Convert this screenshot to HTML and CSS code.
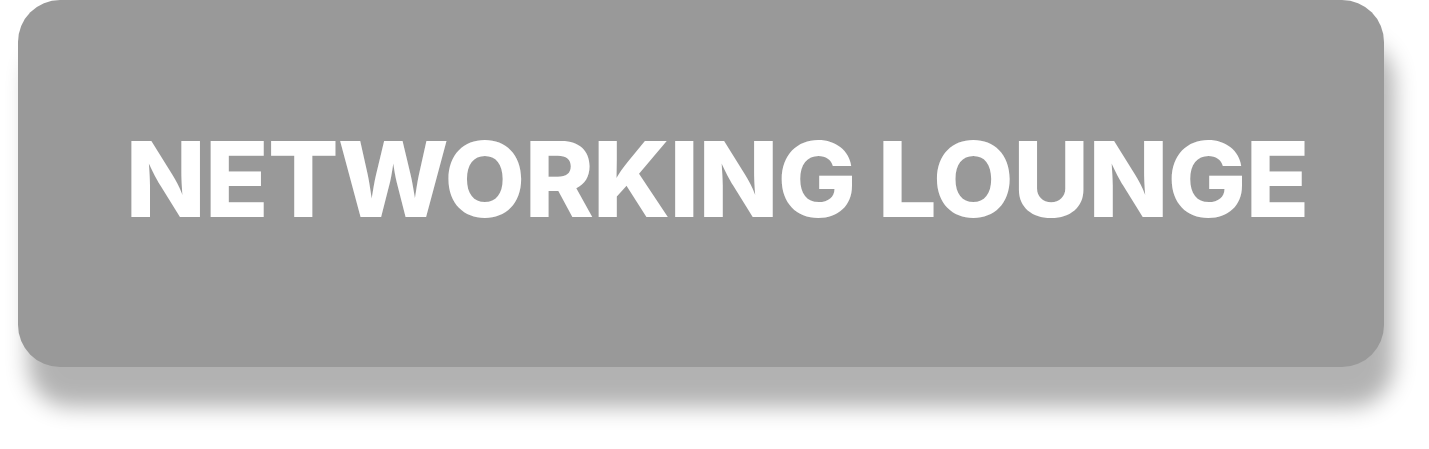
FILE: index.html
```html
<!DOCTYPE html>
<html>
<head>
<meta charset="utf-8">
<link rel="stylesheet" href="styles.css">
</head>
<body>
<div class="page">
  <div class="card">
    <h1 class="title">NETWORKING LOUNGE</h1>
  </div>
</div>
</body>
</html>
```
FILE: styles.css
```css
html, body {
  margin: 0;
  padding: 0;
  background: #ffffff;
}
.page {
  padding: 0 0 0 18px;
  width: 1429px;
  height: 449px;
  box-sizing: border-box;
  overflow: hidden;
}
.card {
  width: 1366px;
  height: 367px;
  background: #999999;
  border-radius: 42px;
  box-shadow: 10px 40px 22px rgba(0, 0, 0, 0.3);
  display: flex;
  justify-content: center;
  align-items: flex-start;
  padding-left: 32px;
  box-sizing: border-box;
}
.title {
  margin: 0;
  padding-top: 119px;
  font-family: "Inter", "Liberation Sans", sans-serif;
  font-weight: 800;
  font-size: 105px;
  letter-spacing: -1.05px;
  line-height: 120px;
  color: #ffffff;
  white-space: nowrap;
}
```
